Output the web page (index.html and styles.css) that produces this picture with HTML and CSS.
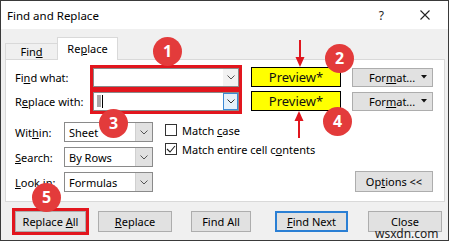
FILE: index.html
```html
<!DOCTYPE html>
<html>
<head>
<meta charset="utf-8">
<link rel="stylesheet" href="styles.css">
</head>
<body>
<div class="dialog">
  <div class="titlebar">
    <span class="title">Find and Replace</span>
    <span class="help">?</span>
    <span class="closex"><svg width="10" height="10" viewBox="0 0 10 10"><path d="M0.5 0.5L9.5 9.5M9.5 0.5L0.5 9.5" stroke="#222" stroke-width="1.1"/></svg></span>
  </div>
  <div class="main">
    <div class="tabs">
      <div class="tab">Fin<u>d</u></div>
      <div class="tab active">Re<u>p</u>lace</div>
    </div>
    <div class="panel">
      <div class="row">
        <span class="lbl">Fi<u>n</u>d what:</span>
        <div class="combo wide hl">
          <span class="field"></span>
          <span class="dd"><svg width="8" height="5" viewBox="0 0 8 5"><polyline points="0.5,0.5 4,4 7.5,0.5" fill="none" stroke="#555" stroke-width="1"/></svg></span>
        </div>
        <div class="preview">Preview*</div>
        <div class="btn fmt"><span>For<u>m</u>at...</span><svg class="caret" width="6" height="4" viewBox="0 0 6 4"><polygon points="0,0 6,0 3,3.5" fill="#111"/></svg></div>
      </div>
      <div class="row">
        <span class="lbl">R<u>e</u>place with:</span>
        <div class="combo wide hl">
          <span class="field"><span class="sel"></span><span class="cursor"></span></span>
          <span class="dd focus"><svg width="8" height="5" viewBox="0 0 8 5"><polyline points="0.5,0.5 4,4 7.5,0.5" fill="none" stroke="#333" stroke-width="1"/></svg></span>
        </div>
        <div class="preview">Preview*</div>
        <div class="btn fmt"><span>For<u>m</u>at...</span><svg class="caret" width="6" height="4" viewBox="0 0 6 4"><polygon points="0,0 6,0 3,3.5" fill="#111"/></svg></div>
      </div>
      <div class="lower">
        <div class="fields">
          <span class="lbl2">Wit<u>h</u>in:</span>
          <div class="combo small"><span class="field">Sheet</span><span class="dd gray"><svg width="8" height="5" viewBox="0 0 8 5"><polyline points="0.5,0.5 4,4 7.5,0.5" fill="none" stroke="#555" stroke-width="1"/></svg></span></div>
          <span class="lbl2"><u>S</u>earch:</span>
          <div class="combo small"><span class="field">By Rows</span><span class="dd gray"><svg width="8" height="5" viewBox="0 0 8 5"><polyline points="0.5,0.5 4,4 7.5,0.5" fill="none" stroke="#555" stroke-width="1"/></svg></span></div>
          <span class="lbl2"><u>L</u>ook <u>i</u>n:</span>
          <div class="combo small"><span class="field">Formulas</span><span class="dd gray"><svg width="8" height="5" viewBox="0 0 8 5"><polyline points="0.5,0.5 4,4 7.5,0.5" fill="none" stroke="#555" stroke-width="1"/></svg></span></div>
        </div>
        <div class="checks">
          <div class="check"><span class="box"></span><span>Match <u>c</u>ase</span></div>
          <div class="check"><span class="box"><svg width="10" height="10" viewBox="0 0 10 10"><polyline points="1,5 4,8 9,2" fill="none" stroke="#222" stroke-width="1.1"/></svg></span><span>Match entire cell c<u>o</u>ntents</span></div>
        </div>
        <div class="btn options"><span>Op<u>t</u>ions &lt;&lt;</span></div>
      </div>
    </div>
    <div class="buttons">
      <div class="btn b-all hl"><span>Replace <u>A</u>ll</span></div>
      <div class="btn b-rep"><span><u>R</u>eplace</span></div>
      <div class="btn b-fall"><span>Find All</span></div>
      <div class="btn b-next"><span><u>F</u>ind Next</span></div>
      <div class="btn b-close"><span>Close</span></div>
    </div>
  </div>

  <svg class="arrows" width="447" height="239" viewBox="0 0 447 239">
    <line x1="299" y1="39" x2="299" y2="58" stroke="#e0161e" stroke-width="2"/>
    <polygon points="294.5,56 303.5,56 299,66" fill="#e0161e"/>
    <line x1="298" y1="137" x2="298" y2="118" stroke="#e0161e" stroke-width="2"/>
    <polygon points="293.5,120 302.5,120 298,110" fill="#e0161e"/>
  </svg>
  <div class="num n1">1</div>
  <div class="num n2">2</div>
  <div class="num n3">3</div>
  <div class="num n4">4</div>
  <div class="num n5">5</div>
  <div class="wm">wsxdn.com</div>
</div>
</body>
</html>
```

FILE: styles.css
```css
html, body {
  margin: 0;
  padding: 0;
}
body {
  font-family: "Noto Sans", "DejaVu Sans", sans-serif;
  font-size: 11px;
  color: #000;
}
u {
  text-decoration-thickness: 1px;
  text-underline-offset: 1px;
}
.dialog {
  position: relative;
  width: 449px;
  height: 241px;
  box-sizing: border-box;
  border: 1px solid #3a3a3a;
  background: #f0f0f0;
  display: flex;
  flex-direction: column;
  overflow: hidden;
}
.titlebar {
  height: 28px;
  flex: none;
  background: #fff;
  display: flex;
  align-items: center;
  padding-left: 6px;
}
.title {
  flex: 1;
  font-size: 11.5px;
}
.help {
  font-size: 12px;
  color: #222;
  margin-right: 36px;
}
.closex {
  display: flex;
  margin-right: 18px;
}
.main {
  flex: 1;
  padding: 8px 3px 0 4px;
}
.tabs {
  display: flex;
  align-items: flex-end;
  height: 22px;
}
.tab {
  width: 52px;
  height: 16px;
  box-sizing: border-box;
  border: 1px solid #d9d9d9;
  border-bottom: none;
  border-right: none;
  text-align: center;
  line-height: 15px;
}
.tab.active {
  width: 61px;
  height: 23px;
  border-right: 1px solid #d9d9d9;
  background: #fff;
  margin-bottom: -1px;
  padding-top: 3px;
  position: relative;
  z-index: 1;
}
.panel {
  background: #fff;
  border: 1px solid #d9d9d9;
  height: 143px;
  box-sizing: border-box;
  padding: 7px 11px 9px 9px;
}
.row {
  display: flex;
  align-items: center;
  height: 20px;
}
.row + .row {
  margin-top: 4px;
}
.lbl {
  width: 78px;
  flex: none;
}
.combo {
  box-sizing: border-box;
  border: 1px solid #8a8a8a;
  background: #fff;
  display: flex;
  align-items: stretch;
}
.combo.wide {
  width: 146px;
  height: 19px;
}
.hl {
  outline: 3px solid #e2161e;
}
.field {
  flex: 1;
  display: flex;
  align-items: center;
  padding-left: 5px;
}
.sel {
  width: 4px;
  height: 12px;
  background: #a8a8a8;
  margin-left: -2px;
}
.cursor {
  width: 1px;
  height: 13px;
  background: #000;
  margin-left: 1px;
}
.dd {
  width: 15px;
  flex: none;
  display: flex;
  align-items: center;
  justify-content: center;
  background: #f2f2f2;
}
.dd.focus {
  background: #e5f1fb;
  outline: 1px solid #3c8ad6;
  outline-offset: -1px;
}
.dd.gray {
  width: 16px;
  background: #e1e1e1;
  border-left: 1px solid #d0d0d0;
}
.preview {
  margin-left: 12px;
  width: 90px;
  height: 20px;
  box-sizing: border-box;
  border: 1px solid #000;
  background: #ffff00;
  font-size: 13px;
  text-align: center;
  line-height: 18px;
  color: #111;
}
.btn {
  background: #e1e1e1;
  border: 1px solid #adadad;
  box-sizing: border-box;
  display: flex;
  align-items: center;
  justify-content: center;
}
.fmt {
  margin-left: 11px;
  width: 81px;
  height: 19px;
  justify-content: flex-start;
  padding-left: 16px;
}
.fmt .caret {
  margin-left: auto;
  margin-right: 5px;
}
.lower {
  margin-top: 11px;
  height: 70px;
  display: flex;
}
.fields {
  display: grid;
  grid-template-columns: 49px 89px;
  grid-auto-rows: 20px;
  row-gap: 5px;
  align-items: center;
}
.combo.small {
  width: 89px;
  height: 20px;
}
.combo.small .field {
  padding-left: 4px;
}
.checks {
  margin-left: 12px;
  padding-top: 2px;
  display: flex;
  flex-direction: column;
  gap: 7px;
}
.check {
  display: flex;
  align-items: center;
  height: 12px;
  gap: 5px;
}
.box {
  width: 12px;
  height: 12px;
  box-sizing: border-box;
  border: 1px solid #333;
  background: #fff;
  display: flex;
  align-items: center;
  justify-content: center;
}
.options {
  margin-left: auto;
  align-self: flex-end;
  width: 78px;
  height: 21px;
}
.buttons {
  display: flex;
  margin-top: 9px;
  padding-left: 10px;
}
.buttons .btn {
  height: 21px;
}
.b-all { width: 71px; }
.b-rep { width: 74px; margin-left: 12px; }
.b-fall { width: 60px; margin-left: 19px; }
.b-next { width: 73px; margin-left: 24px; border: 2px solid #2a7fd4; }
.b-close { width: 74px; margin-left: 20px; }
.arrows {
  position: absolute;
  left: 0;
  top: 0;
  pointer-events: none;
}
.num {
  position: absolute;
  width: 29px;
  height: 29px;
  border-radius: 50%;
  background: #e33b3b;
  color: #fff;
  font-weight: bold;
  font-size: 16px;
  line-height: 29px;
  text-align: center;
}
.n1 { left: 152px; top: 36px; }
.n2 { left: 324px; top: 43px; }
.n3 { left: 98px; top: 108px; }
.n4 { left: 322px; top: 106px; }
.n5 { left: 31px; top: 182px; }
.wm {
  position: absolute;
  left: 374px;
  top: 224px;
  font-size: 12px;
  color: #222;
}
```
